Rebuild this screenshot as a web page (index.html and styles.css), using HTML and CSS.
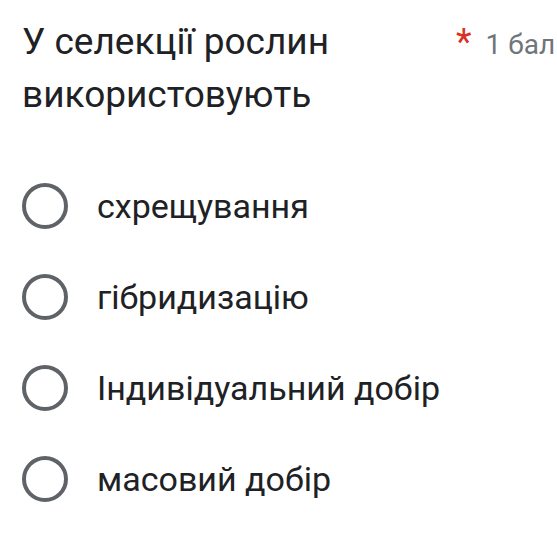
FILE: index.html
```html
<!DOCTYPE html>
<html lang="uk">
<head>
<meta charset="utf-8">
<link rel="stylesheet" href="styles.css">
</head>
<body>
<div class="card">
  <div class="header">
    <div class="title">У селекції рослин використовують</div>
    <div class="meta"><span class="star">*</span><span class="points">1 бал</span></div>
  </div>
  <div class="options">
    <div class="option"><span class="radio"></span><span class="label">схрещування</span></div>
    <div class="option"><span class="radio"></span><span class="label">гібридизацію</span></div>
    <div class="option"><span class="radio"></span><span class="label">Індивідуальний добір</span></div>
    <div class="option"><span class="radio"></span><span class="label">масовий добір</span></div>
  </div>
</div>
</body>
</html>
```
FILE: styles.css
```css
html, body {
  margin: 0;
  padding: 0;
  background: #ffffff;
  overflow: hidden;
}
body {
  font-family: Roboto, "Noto Sans", sans-serif;
  color: #202124;
}
.card {
  width: 557px;
  height: 538px;
  padding: 15px 0 0 22px;
  box-sizing: border-box;
}
.header {
  display: flex;
  align-items: flex-start;
  white-space: nowrap;
}
.title {
  width: 420px;
  white-space: normal;
  font-size: 37px;
  line-height: 53px;
  color: #202124;
}
.meta {
  display: flex;
  align-items: baseline;
  margin-left: 14px;
  padding-top: 6px;
}
.star {
  color: #d93025;
  font-size: 36px;
  margin-right: 14px;
}
.points {
  font-size: 28px;
  color: #70757a;
}
.options {
  display: flex;
  flex-direction: column;
  margin-top: 39px;
}
.option {
  display: flex;
  align-items: center;
  height: 91px;
}
.radio {
  width: 38px;
  height: 38px;
  border: 4px solid #5f6368;
  border-radius: 50%;
  flex: none;
}
.label {
  margin-left: 29px;
  font-size: 34px;
  color: #202124;
}
```
